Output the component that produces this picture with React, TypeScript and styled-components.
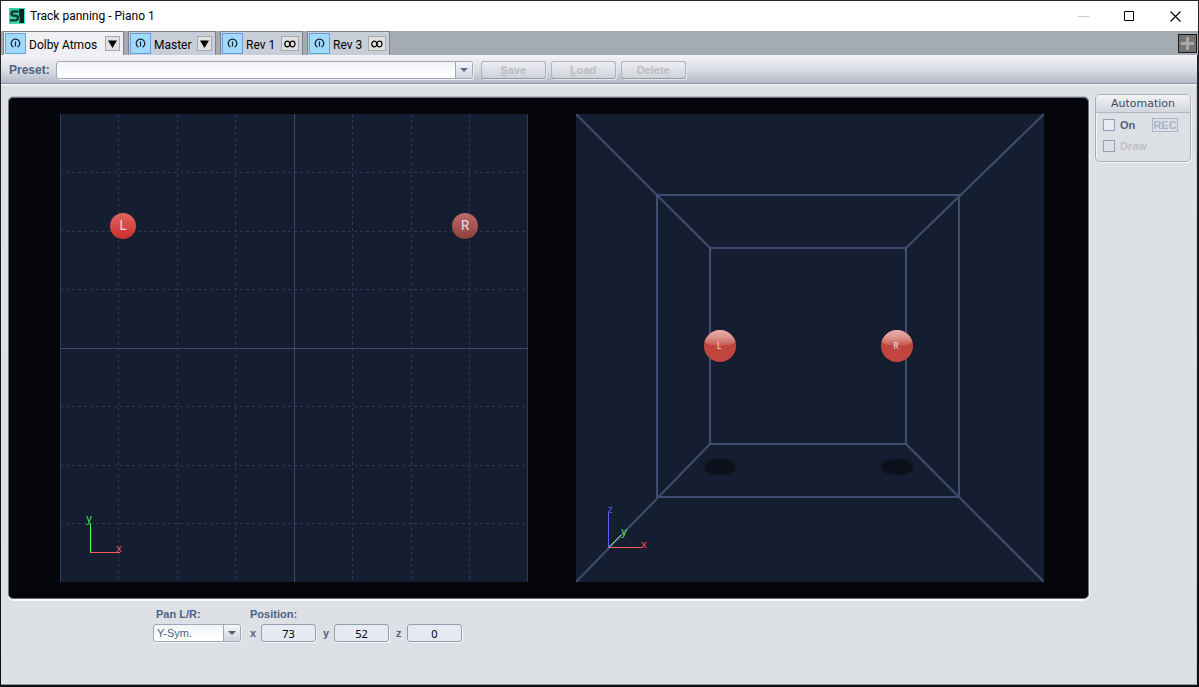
import React from "react";
import styled, { createGlobalStyle } from "styled-components";

const ui = `"Liberation Sans", Arial, sans-serif`;
const system = `Roboto, "Noto Sans", sans-serif`;
const humanist = `"Noto Sans", "Open Sans", sans-serif`;

const Global = createGlobalStyle`
  *, *::before, *::after { box-sizing: border-box; }
  body { margin: 0; background: #17171b; font: 12px ${ui}; color: #4f6280; }
  button, input, select { font: inherit; color: inherit; margin: 0; padding: 0; }
`;

const Page = styled.div`
  display: flex;
  min-height: 100vh;
  padding: 1px 1px 2px;
  background: linear-gradient(#26242a, #101014);
`;

const Window = styled.main`
  flex: 1;
  min-width: 0;
  display: flex;
  flex-direction: column;
`;

const TitleBar = styled.header`
  display: flex;
  align-items: center;
  height: 30px;
  padding-left: 8px;
  background: #fff;
`;

const Title = styled.h1`
  flex: 1;
  margin: 0 0 0 5px;
  font: 400 12px/16px ${system};
  color: #000;
`;

const CaptionButton = styled.button<{ $faded?: boolean }>`
  display: grid;
  place-items: center;
  width: 46px;
  height: 30px;
  border: 0;
  background: none;
  color: ${(p) => (p.$faded ? "#c8c8c8" : "#000")};
`;

const TabBar = styled.nav`
  display: flex;
  gap: 4px;
  height: 24px;
  padding: 0 1px 0 2px;
  background: #a3abb3;
`;

const Tab = styled.div<{ $active?: boolean; $width: number }>`
  display: flex;
  align-items: center;
  flex: 0 0 ${(p) => p.$width}px;
  padding: 0 3px 0 1px;
  border: 1px solid #7e8084;
  border-bottom: 0;
  background: ${(p) => (p.$active ? "#efeff4" : "#c8ced8")};
`;

const PowerButton = styled.button`
  display: grid;
  place-items: center;
  width: 21px;
  height: 21px;
  border: 1px solid #64a0e0;
  background: #a2d9ff;
  color: #10202c;
`;

const TabLabel = styled.button`
  flex: 1;
  padding: 2px 0 0 3px;
  border: 0;
  background: none;
  font: 12px/16px ${system};
  text-align: left;
  white-space: nowrap;
  color: #000;
`;

const TabAction = styled.button<{ $wide?: boolean }>`
  display: grid;
  place-items: center;
  width: ${(p) => (p.$wide ? 18 : 15)}px;
  height: 15px;
  border: 1px solid #a8a8a8;
  background: #e1e1e1;
  color: #000;
`;

const AddTab = styled.button`
  display: grid;
  place-items: center;
  align-self: center;
  width: 19px;
  height: 19px;
  margin-left: auto;
  border: 1px solid #1b1b1b;
  background: #737373;
`;

const Toolbar = styled.div`
  display: flex;
  align-items: center;
  height: 29px;
  margin-right: 1px;
  padding: 2px 0 0 8px;
  border-bottom: 1px solid #8e97aa;
  background: linear-gradient(#f3f3f7, #d9dce3 55%, #b3b9c5);
`;

const Caption = styled.label`
  font-weight: 700;
  line-height: 14px;
  white-space: nowrap;
`;

const Combo = styled.div<{ $width: number }>`
  position: relative;
  display: flex;
  width: ${(p) => p.$width}px;
  height: 18px;
  border: 1px solid #a1a9b9;
  border-radius: 3px;
  background: linear-gradient(#f1f3f8, #fff 80%);
  box-shadow: 1px 1px 0 #f0f2f5;
  overflow: hidden;
`;

const Select = styled.select`
  appearance: none;
  flex: 1;
  min-width: 0;
  padding: 0 18px 0 3px;
  border: 0;
  background: none;
  font-size: 11px;
  line-height: 16px;
`;

const ComboArrow = styled.span`
  position: absolute;
  inset: 0 0 0 auto;
  display: grid;
  place-items: center;
  width: 17px;
  border-left: 1px solid #a1a9b9;
  background: linear-gradient(#f6f7fa, #cfd4de);
  pointer-events: none;
`;

const PresetCombo = styled(Combo)`
  margin: 0 8px 0 6px;
`;

const ButtonRow = styled.div`
  display: flex;
  gap: 5px;
`;

const PushButton = styled.button`
  width: 65px;
  height: 18px;
  border: 1px solid #b0b3b9;
  border-bottom-color: #94979e;
  border-radius: 3px;
  background: linear-gradient(#eeeff3, #ced2da);
  box-shadow: 1px 1px 0 #e3e5ea;
  font-size: 11px;
  font-weight: 700;
  line-height: 16px;
  color: #bbbcbf;
`;

const Content = styled.div`
  flex: 1;
  display: flex;
  align-items: flex-start;
  gap: 6px;
  margin-right: 1px;
  padding: 10px 5px 0 7px;
  border: 1px solid #c4c8d6;
  border-width: 0 1px 1px 0;
  border-bottom-color: #8f94ab;
  background: #dde1e6;
  box-shadow: inset 0 2px 0 #eceff3;
`;

const Editor = styled.section`
  flex: 1;
  min-width: 0;
  padding-top: 3px;
`;

const Stage = styled.div`
  display: flex;
  justify-content: center;
  gap: 48px;
  padding: 16px 0 16px 7px;
  border: 1px solid #6d7078;
  border-radius: 5px;
  background: #04060b;
  box-shadow: 0 -1px 0 #b6b9be, 0 2px 0 #f8f9fb, 1px 0 0 #f0f2f5;
`;

const Plot = styled.svg`
  flex: 0 1 468px;
  min-width: 0;
  display: block;
  background: #151d30;
`;

const Controls = styled.div`
  display: flex;
  gap: 9px;
  padding: 8px 0 0 145px;
`;

const Field = styled.div`
  display: flex;
  flex-direction: column;
  gap: 3px;
`;

const FieldTitle = styled(Caption)<{ $indent?: boolean }>`
  font-size: 11px;
  padding-left: ${(p) => (p.$indent ? 3 : 0)}px;
`;

const Coordinates = styled.div`
  display: flex;
  gap: 7px;
`;

const Coordinate = styled.label`
  display: grid;
  grid-template-columns: 11px 55px;
  align-items: center;
  font-size: 11px;
  font-weight: 700;
`;

const NumberInput = styled.input`
  width: 55px;
  height: 18px;
  border: 1px solid #949cae;
  border-radius: 3px;
  background: #e6eaf4;
  box-shadow: 1px 1px 0 #f3f5f8;
  font: 11px/16px ${humanist};
  text-align: center;
  color: #000;
`;

const Group = styled.fieldset`
  flex: 0 0 96px;
  min-width: 0;
  margin: 0;
  padding: 0 0 6px;
  border: 1px solid #abaeb3;
  border-radius: 5px;
  box-shadow: 1px 1px 0 #f4f5f7, inset 1px 1px 0 #f4f5f7;
`;

const GroupTitle = styled.h2`
  margin: 0;
  height: 18px;
  border-bottom: 1px solid #b3b6ba;
  border-radius: 4px 4px 0 0;
  background: linear-gradient(#f2f3f6, #d3d6dc);
  font: 400 11px/18px "DejaVu Sans", sans-serif;
  text-align: center;
  color: #3e4a63;
`;

const OptionRow = styled.div`
  display: flex;
  align-items: center;
  justify-content: space-between;
  height: 21px;
  padding: 3px 12px 0 7px;
`;

const Check = styled.label<{ $off?: boolean }>`
  display: flex;
  align-items: center;
  gap: 5px;
  font-weight: 700;
  font-size: 11px;
  color: ${(p) => (p.$off ? "#bfc0c3" : "#4f6280")};
`;

const Box = styled.input`
  appearance: none;
  width: 12px;
  height: 12px;
  border: 1px solid #999fb2;
  background: #e8ebf5;
  &:disabled { background: #dde1e6; }
`;

const RecButton = styled.button`
  width: 26px;
  height: 14px;
  border: 1px solid #a9b4c7;
  background: none;
  font-size: 11px;
  line-height: 12px;
  font-weight: 700;
  color: #a9b4c7;
`;

const Logo = () => (
  <svg width="16" height="16" viewBox="0 0 16 16" aria-hidden="true">
    <defs>
      <linearGradient id="logo" x1="0" y1="0" x2="1" y2="1">
        <stop offset="0" stopColor="#2fc79b" />
        <stop offset="1" stopColor="#4fe8b8" />
      </linearGradient>
    </defs>
    <rect width="16" height="16" fill="url(#logo)" />
    <path d="M10 1H15V15H10L11 11L10 7Z" fill="#12201f" />
    <path d="M9.5 3.5H5Q2.5 3.5 2.5 5.5T5 7.7H6.5Q9 7.7 9 10T6.5 12.4H1" fill="none" stroke="#0f3f35" strokeWidth="2.4" />
  </svg>
);

const PowerIcon = () => (
  <svg width="11" height="11" viewBox="0 0 11 11" fill="none" stroke="currentColor" strokeWidth="1.2" aria-hidden="true">
    <path d="M3.4 9.2A4.3 4.3 0 1 1 7.6 9.2" />
    <path d="M5.5 3.5V8.5" />
  </svg>
);

const DownIcon = () => (
  <svg width="9" height="8" viewBox="0 0 9 8" aria-hidden="true">
    <path d="M0 0.5H9L4.5 8Z" fill="currentColor" />
  </svg>
);

const LinkIcon = () => (
  <svg width="12" height="8" viewBox="0 0 12 8" fill="none" stroke="currentColor" strokeWidth="1.2" aria-hidden="true">
    <ellipse cx="3.3" cy="4" rx="2.5" ry="2.8" />
    <ellipse cx="8.5" cy="4" rx="2.5" ry="2.8" />
  </svg>
);

const ArrowIcon = ({ color }: { color: string }) => (
  <svg width="8" height="4" viewBox="0 0 8 4" aria-hidden="true">
    <path d="M0 0H8L4 4Z" fill={color} />
  </svg>
);

const tabs = [
  { name: "Dolby Atmos", width: 121, active: true, linked: false },
  { name: "Master", width: 88, active: false, linked: false },
  { name: "Rev 1", width: 83, active: false, linked: true },
  { name: "Rev 3", width: 83, active: false, linked: true },
];

const gridLines = [58.5, 117.5, 175.5, 292.5, 351.5, 409.5];
const coordinates = [
  { axis: "x", value: "73" },
  { axis: "y", value: "52" },
  { axis: "z", value: "0" },
];

const TopView = () => (
  <Plot viewBox="0 0 468 468" role="img" aria-label="Top view">
    <defs>
      <linearGradient id="ballL" x1="0" y1="0" x2="0" y2="1">
        <stop offset="0" stopColor="#e2645e" />
        <stop offset="1" stopColor="#c62f2a" />
      </linearGradient>
      <linearGradient id="ballR" x1="0" y1="0" x2="0" y2="1">
        <stop offset="0" stopColor="#bd6c68" />
        <stop offset="1" stopColor="#8d3d3a" />
      </linearGradient>
    </defs>
    <g stroke="#2c3858" strokeDasharray="3 3">
      {gridLines.map((p) => (
        <path key={p} d={`M${p} 0V468M0 ${p}H468`} />
      ))}
    </g>
    <path d="M0.5 0V468M467.5 0V468" stroke="#2c3a60" />
    <path d="M234.5 0V468M0 234.5H468" stroke="#3b4a6e" />
    <path d="M30.5 409V438" stroke="#5cff5c" />
    <path d="M30 438.5H60" stroke="#ff5c5c" />
    <g fontFamily="Noto Sans, sans-serif" fontSize="11" textAnchor="middle">
      <text x="29" y="408" fill="#4fe05a">y</text>
      <text x="59" y="438" fill="#e8504f">x</text>
    </g>
    <circle cx="63" cy="112" r="13" fill="url(#ballL)" />
    <circle cx="405" cy="112" r="13" fill="url(#ballR)" />
    <g fontFamily="Noto Sans, sans-serif" fontSize="14" textAnchor="middle" fill="#dfe0ee">
      <text x="63" y="116">L</text>
      <text x="405" y="116">R</text>
    </g>
  </Plot>
);

const RoomView = () => (
  <Plot viewBox="0 0 468 468" role="img" aria-label="Room view">
    <defs>
      <linearGradient id="gloss" x1="0" y1="0" x2="0" y2="1">
        <stop offset="0" stopColor="#ecb5b1" />
        <stop offset="0.5" stopColor="#dc9790" />
        <stop offset="1" stopColor="#c4554c" />
      </linearGradient>
      <filter id="soft" x="-20%" y="-40%" width="140%" height="180%" colorInterpolationFilters="sRGB">
        <feGaussianBlur stdDeviation="1.2" />
      </filter>
      <clipPath id="sphere">
        <circle r="16" />
      </clipPath>
    </defs>
    <g fill="none" stroke="#3f4e70" strokeWidth="2">
      <path d="M0 0L134 134M468 0L330 134M0 468L134 330M468 468L330 330" />
      <rect x="81" y="81" width="302" height="302" />
      <rect x="134" y="134" width="196" height="196" />
    </g>
    <g fill="#0b101b" filter="url(#soft)">
      <ellipse cx="144" cy="353" rx="16" ry="8" />
      <ellipse cx="321" cy="353" rx="16" ry="8" />
    </g>
    {[144, 321].map((x, i) => (
      <g key={x} transform={`translate(${x} 232)`}>
        <circle r="16" fill="#c0453c" />
        <g clipPath="url(#sphere)">
          <ellipse cy="-9" rx="19" ry="9" fill="url(#gloss)" />
        </g>
        <text y="3" x="-1" fontFamily="Noto Sans, sans-serif" fontSize="8" textAnchor="middle" fill="#f7e6ee">
          {i ? "R" : "L"}
        </text>
      </g>
    ))}
    <path d="M32.5 398V433" stroke="#5c5cff" />
    <path d="M32.5 433.5L45 421" stroke="#7df59a" />
    <path d="M33 433.5H67" stroke="#ff5c5c" />
    <g fontFamily="Noto Sans, sans-serif" fontSize="11" textAnchor="middle">
      <text x="34" y="399" fill="#5554e6">z</text>
      <text x="48" y="421" fill="#4fe05a">y</text>
      <text x="68" y="434" fill="#e8504f">x</text>
    </g>
  </Plot>
);

export default function App() {
  return (
    <>
      <Global />
      <Page>
        <Window>
          <TitleBar>
            <Logo />
            <Title>Track panning - Piano 1</Title>
            <CaptionButton $faded aria-label="Minimize">
              <svg width="11" height="11" viewBox="0 0 11 11" stroke="currentColor"><path d="M0 5.5H11" /></svg>
            </CaptionButton>
            <CaptionButton aria-label="Maximize">
              <svg width="11" height="11" viewBox="0 0 11 11" stroke="currentColor" fill="none"><path d="M0.5 0.5H9.5V9.5H0.5Z" /></svg>
            </CaptionButton>
            <CaptionButton aria-label="Close">
              <svg width="11" height="11" viewBox="0 0 11 11" stroke="currentColor" strokeWidth="1.1"><path d="M0.5 0.5L10.5 10.5M10.5 0.5L0.5 10.5" /></svg>
            </CaptionButton>
          </TitleBar>
          <TabBar>
            {tabs.map((t) => (
              <Tab key={t.name} $active={t.active} $width={t.width}>
                <PowerButton aria-label={`Bypass ${t.name}`}><PowerIcon /></PowerButton>
                <TabLabel>{t.name}</TabLabel>
                <TabAction $wide={t.linked} aria-label={`${t.name} options`}>
                  {t.linked ? <LinkIcon /> : <DownIcon />}
                </TabAction>
              </Tab>
            ))}
            <AddTab aria-label="Add">
              <svg width="13" height="13" viewBox="0 0 13 13" stroke="#a9a9a9" strokeWidth="3"><path d="M6.5 0V13M0 6.5H13" /></svg>
            </AddTab>
          </TabBar>
          <Toolbar>
            <Caption htmlFor="preset">Preset:</Caption>
            <PresetCombo $width={417}>
              <Select id="preset" />
              <ComboArrow><ArrowIcon color="#5f6796" /></ComboArrow>
            </PresetCombo>
            <ButtonRow>
              <PushButton disabled><u>S</u>ave</PushButton>
              <PushButton disabled><u>L</u>oad</PushButton>
              <PushButton disabled>Delete</PushButton>
            </ButtonRow>
          </Toolbar>
          <Content>
            <Editor>
              <Stage>
                <TopView />
                <RoomView />
              </Stage>
              <Controls>
                <Field>
                  <FieldTitle htmlFor="pan" $indent>Pan L/R:</FieldTitle>
                  <Combo $width={88}>
                    <Select id="pan" defaultValue="Y-Sym."><option>Y-Sym.</option></Select>
                    <ComboArrow><ArrowIcon color="#5b5b5b" /></ComboArrow>
                  </Combo>
                </Field>
                <Field>
                  <FieldTitle as="span">Position:</FieldTitle>
                  <Coordinates>
                    {coordinates.map((c) => (
                      <Coordinate key={c.axis}>
                        {c.axis}
                        <NumberInput defaultValue={c.value} />
                      </Coordinate>
                    ))}
                  </Coordinates>
                </Field>
              </Controls>
            </Editor>
            <Group>
              <GroupTitle>Automation</GroupTitle>
              <OptionRow>
                <Check><Box type="checkbox" />On</Check>
                <RecButton>REC</RecButton>
              </OptionRow>
              <OptionRow>
                <Check $off><Box type="checkbox" disabled />Draw</Check>
              </OptionRow>
            </Group>
          </Content>
        </Window>
      </Page>
    </>
  );
}
